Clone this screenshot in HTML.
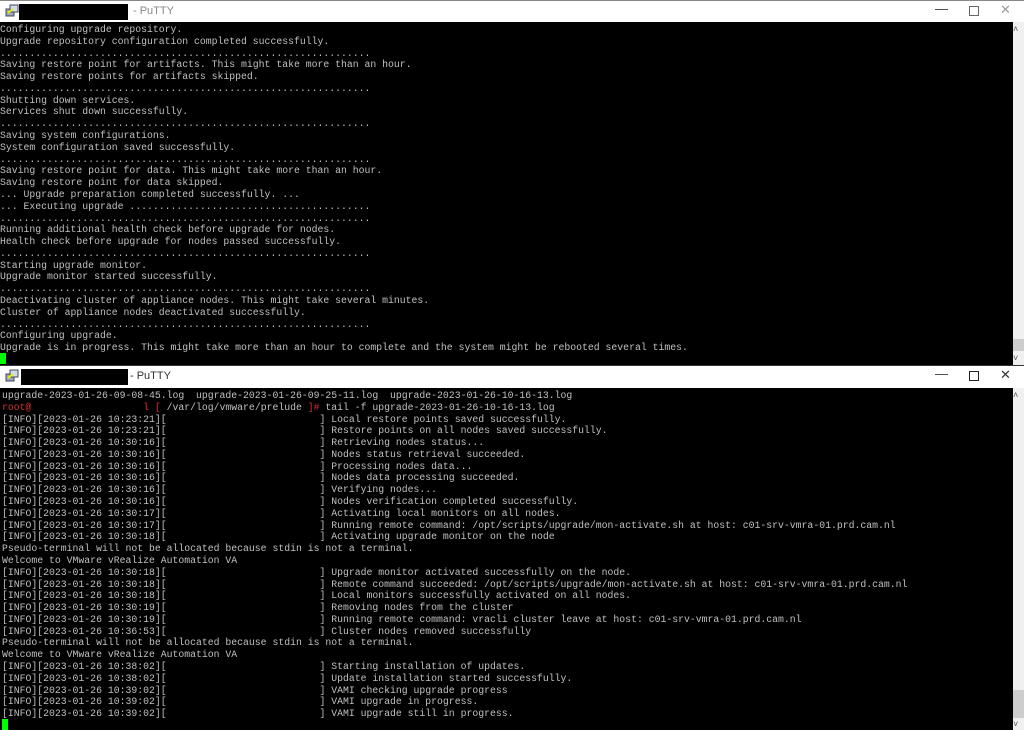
<!DOCTYPE html>
<html><head><meta charset="utf-8"><style>
*{margin:0;padding:0;box-sizing:border-box}
body{width:1024px;height:730px;overflow:hidden;background:#fff;position:relative;font-family:"Liberation Sans",sans-serif}
.win{position:absolute;left:0;width:1024px;background:#000}
.title{position:absolute;left:0;width:1024px;height:22px;background:#fff;font-size:12px;color:#777}
.red{position:absolute;background:#000;height:16px}
pre{position:absolute;font-family:"Liberation Mono",monospace;font-size:9.8px;line-height:11.78px;color:#c0c0c0;white-space:pre}
.sb{position:absolute;right:0;width:11px;background:#f0f0f0}
.th{position:absolute;right:0;width:11px;background:#cdcdcd}
.r{color:#d23030}
.ctl{position:absolute;font-size:13px;color:#333}
.cur{position:absolute;width:6px;height:11px;background:#00ff00}
.ico{position:absolute;width:14px;height:14px}
</style></head><body>
<div class="title" style="top:0;border-top:1px solid #888"></div>
<svg class="ico" style="left:5px;top:4px" viewBox="0 0 14 14"><rect x="1" y="5" width="8" height="7" fill="#9ab" stroke="#445"/><rect x="5" y="1" width="8" height="7" fill="#cde" stroke="#445"/><path d="M3 9l5-4" stroke="#ee0" stroke-width="2"/></svg>
<div class="red" style="left:19px;top:4px;width:109px"></div>
<div style="position:absolute;left:133px;top:5px;font-size:11px;color:#888">- PuTTY</div>
<div class="ctl" style="left:935px;top:1px">&#8212;</div>
<div style="position:absolute;left:969px;top:6px;width:10px;height:10px;border:1px solid #666"></div>
<div class="ctl" style="left:1000px;top:2px;color:#999">&#10005;</div>
<div class="win" style="top:22px;height:343px"></div>
<div class="sb" style="top:22px;height:343px"></div>
<div class="th" style="top:339px;height:12px"></div>
<div style="position:absolute;left:1013px;top:24px;font-size:9px;color:#555">&#708;</div>
<div style="position:absolute;left:1013px;top:353px;font-size:9px;color:#555">&#709;</div>
<pre style="left:0;top:24px">Configuring upgrade repository.
Upgrade repository configuration completed successfully.
...............................................................
Saving restore point for artifacts. This might take more than an hour.
Saving restore points for artifacts skipped.
...............................................................
Shutting down services.
Services shut down successfully.
...............................................................
Saving system configurations.
System configuration saved successfully.
...............................................................
Saving restore point for data. This might take more than an hour.
Saving restore point for data skipped.
... Upgrade preparation completed successfully. ...
... Executing upgrade .........................................
...............................................................
Running additional health check before upgrade for nodes.
Health check before upgrade for nodes passed successfully.
...............................................................
Starting upgrade monitor.
Upgrade monitor started successfully.
...............................................................
Deactivating cluster of appliance nodes. This might take several minutes.
Cluster of appliance nodes deactivated successfully.
...............................................................
Configuring upgrade.
Upgrade is in progress. This might take more than an hour to complete and the system might be rebooted several times.</pre>
<div class="cur" style="left:0;top:353px"></div>

<div class="title" style="top:365px;height:23px;border-top:1px solid #333"></div>
<svg class="ico" style="left:5px;top:369px" viewBox="0 0 14 14"><rect x="1" y="5" width="8" height="7" fill="#9ab" stroke="#445"/><rect x="5" y="1" width="8" height="7" fill="#cde" stroke="#445"/><path d="M3 9l5-4" stroke="#ee0" stroke-width="2"/></svg>
<div class="red" style="left:21px;top:369px;width:107px"></div>
<div style="position:absolute;left:130px;top:370px;font-size:11px;color:#333">- PuTTY</div>
<div class="ctl" style="left:935px;top:366px">&#8212;</div>
<div style="position:absolute;left:969px;top:371px;width:10px;height:10px;border:1.5px solid #222"></div>
<div class="ctl" style="left:1000px;top:367px">&#10005;</div>
<div class="win" style="top:388px;height:342px"></div>
<div class="sb" style="top:388px;height:342px"></div>
<div class="th" style="top:690px;height:28px"></div>
<div style="position:absolute;left:1013px;top:390px;font-size:9px;color:#555">&#708;</div>
<div style="position:absolute;left:1013px;top:719px;font-size:9px;color:#555">&#709;</div>
<pre style="left:2px;top:390px">upgrade-2023-01-26-09-08-45.log  upgrade-2023-01-26-09-25-11.log  upgrade-2023-01-26-10-16-13.log
<span class="r">root@</span>                   <span class="r">l [</span> /var/log/vmware/prelude <span class="r">]#</span> tail -f upgrade-2023-01-26-10-16-13.log
[INFO][2023-01-26 10:23:21][                          ] Local restore points saved successfully.
[INFO][2023-01-26 10:23:21][                          ] Restore points on all nodes saved successfully.
[INFO][2023-01-26 10:30:16][                          ] Retrieving nodes status...
[INFO][2023-01-26 10:30:16][                          ] Nodes status retrieval succeeded.
[INFO][2023-01-26 10:30:16][                          ] Processing nodes data...
[INFO][2023-01-26 10:30:16][                          ] Nodes data processing succeeded.
[INFO][2023-01-26 10:30:16][                          ] Verifying nodes...
[INFO][2023-01-26 10:30:16][                          ] Nodes verification completed successfully.
[INFO][2023-01-26 10:30:17][                          ] Activating local monitors on all nodes.
[INFO][2023-01-26 10:30:17][                          ] Running remote command: /opt/scripts/upgrade/mon-activate.sh at host: c01-srv-vmra-01.prd.cam.nl
[INFO][2023-01-26 10:30:18][                          ] Activating upgrade monitor on the node
Pseudo-terminal will not be allocated because stdin is not a terminal.
Welcome to VMware vRealize Automation VA
[INFO][2023-01-26 10:30:18][                          ] Upgrade monitor activated successfully on the node.
[INFO][2023-01-26 10:30:18][                          ] Remote command succeeded: /opt/scripts/upgrade/mon-activate.sh at host: c01-srv-vmra-01.prd.cam.nl
[INFO][2023-01-26 10:30:18][                          ] Local monitors successfully activated on all nodes.
[INFO][2023-01-26 10:30:19][                          ] Removing nodes from the cluster
[INFO][2023-01-26 10:30:19][                          ] Running remote command: vracli cluster leave at host: c01-srv-vmra-01.prd.cam.nl
[INFO][2023-01-26 10:36:53][                          ] Cluster nodes removed successfully
Pseudo-terminal will not be allocated because stdin is not a terminal.
Welcome to VMware vRealize Automation VA
[INFO][2023-01-26 10:38:02][                          ] Starting installation of updates.
[INFO][2023-01-26 10:38:02][                          ] Update installation started successfully.
[INFO][2023-01-26 10:39:02][                          ] VAMI checking upgrade progress
[INFO][2023-01-26 10:39:02][                          ] VAMI upgrade in progress.
[INFO][2023-01-26 10:39:02][                          ] VAMI upgrade still in progress.</pre>
<div class="cur" style="left:2px;top:719px"></div>
</body></html>
